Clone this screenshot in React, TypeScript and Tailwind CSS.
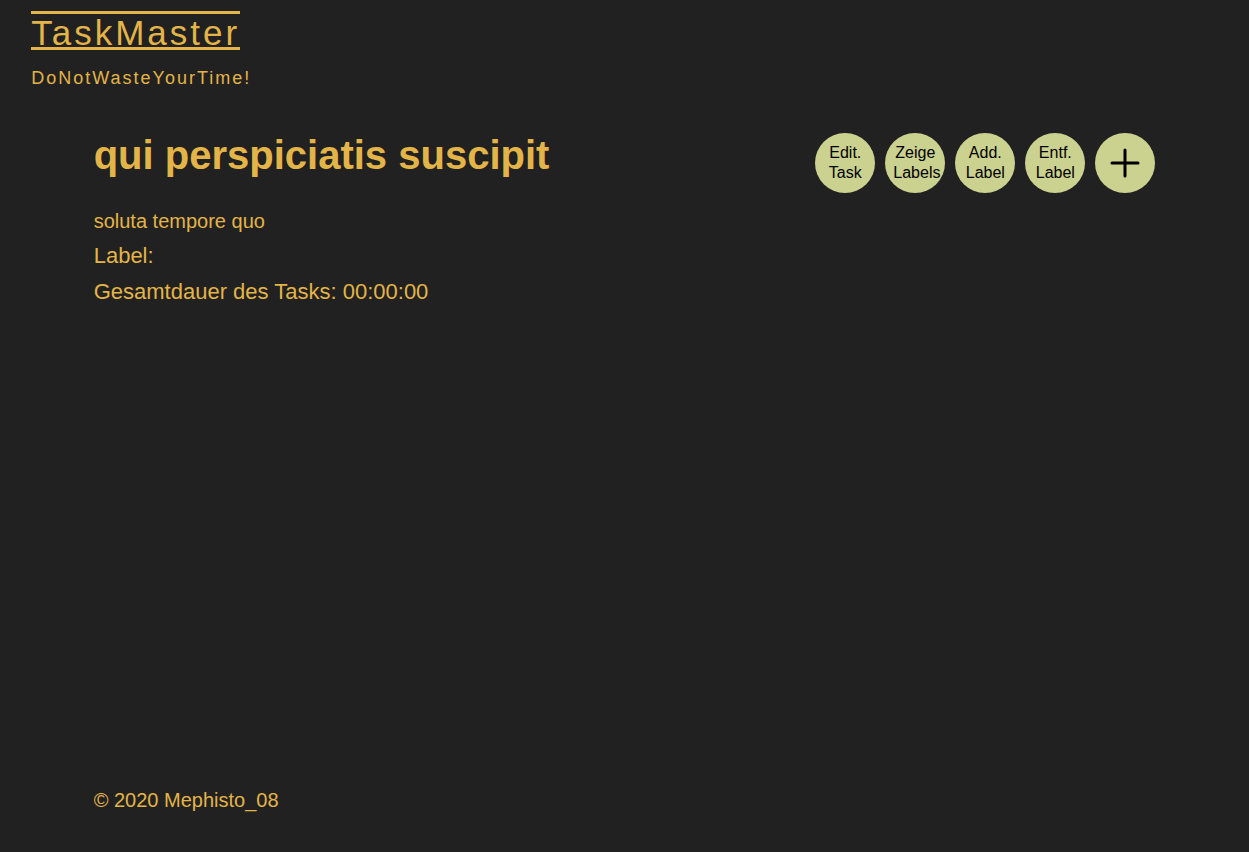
const actions = [
  ["Edit.", "Task"],
  ["Zeige", "Labels"],
  ["Add.", "Label"],
  ["Entf.", "Label"],
];

const circle = "size-[60px] shrink-0 cursor-pointer rounded-full bg-[#cbd18f] text-black";

function Header() {
  return (
    <header className="px-[2.5%] pt-[11px]">
      <a
        href="/"
        className="inline-block border-y-3 border-[#e3b448] pt-1 align-top text-[35px] leading-[29px] tracking-[3px]"
      >
        TaskMaster
      </a>
      <p className="mt-4 text-lg leading-6 tracking-[2px]">DoNotWasteYourTime!</p>
    </header>
  );
}

export default function App() {
  return (
    <div className="flex min-h-screen flex-col bg-[#212121] font-['Liberation_Sans',Arial,sans-serif] text-[#e3b448]">
      <Header />
      <main className="mx-auto mt-10 w-[85%] grow">
        <div className="flex items-start justify-between gap-4">
          <h1 className="text-[40px] leading-[50px] font-bold">qui perspiciatis suscipit</h1>
          <div className="flex gap-2.5 pt-[3px]">
            {actions.map(([first, second]) => (
              <button key={first} type="button" className={`${circle} px-2 text-base leading-5`}>
                {first}
                <br />
                {second}
              </button>
            ))}
            <button type="button" aria-label="Neu" className={`${circle} flex items-center justify-center`}>
              <svg viewBox="0 0 30 30" className="size-[30px]" stroke="currentColor" strokeWidth="3" strokeLinecap="round">
                <path d="M15 2v26M2 15h26" />
              </svg>
            </button>
          </div>
        </div>
        <p className="mt-[11px] text-xl leading-[34px]">soluta tempore quo</p>
        <p className="text-[22px] leading-9">Label:</p>
        <p className="text-[22px] leading-9">Gesamtdauer des Tasks: 00:00:00</p>
      </main>
      <footer className="mx-auto w-[85%] pb-9 text-xl leading-8">© 2020 Mephisto_08</footer>
    </div>
  );
}
